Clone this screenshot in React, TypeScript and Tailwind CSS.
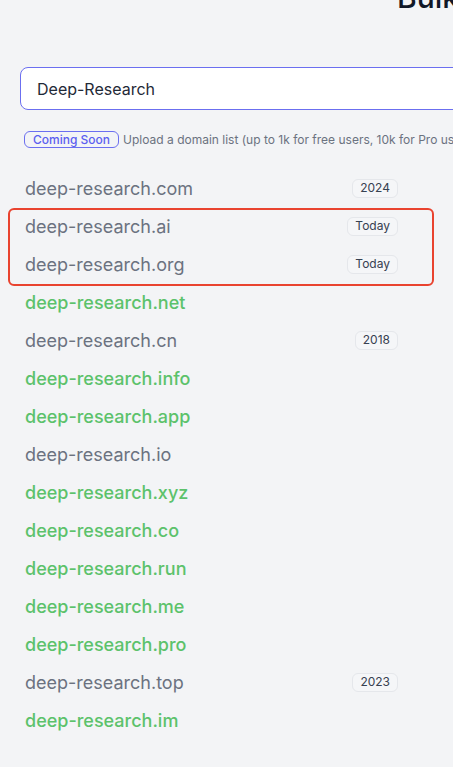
import React from 'react';

type Row = { name: string; year?: string };

const rows: Row[] = [
  { name: 'deep-research.com', year: '2024' },
  { name: 'deep-research.ai', year: 'Today' },
  { name: 'deep-research.org', year: 'Today' },
  { name: 'deep-research.net' },
  { name: 'deep-research.cn', year: '2018' },
  { name: 'deep-research.info' },
  { name: 'deep-research.app' },
  { name: 'deep-research.io', year: '' },
  { name: 'deep-research.xyz' },
  { name: 'deep-research.co' },
  { name: 'deep-research.run' },
  { name: 'deep-research.me' },
  { name: 'deep-research.pro' },
  { name: 'deep-research.top', year: '2023' },
  { name: 'deep-research.im' },
];

export default function App() {
  return (
    <div
      className="relative h-[767px] w-full overflow-hidden bg-[#f3f4f6]"
      style={{ fontFamily: 'Inter, "Noto Sans", sans-serif' }}
    >
      <h1 className="-mt-[21px] whitespace-nowrap pl-[397px] text-[30px] leading-[36px] font-medium text-[#111827]">
        Bulk Domain Search
      </h1>

      <div className="ml-[20px] mt-[52px] w-[520px]">
        <div className="flex h-[43px] items-center rounded-lg border border-[#6b6ff0] bg-white pl-4 text-base text-[#1f2937]">
          Deep-Research
        </div>

        <div className="mt-[21px] flex items-center gap-1 whitespace-nowrap pl-1 text-xs text-[#6b7280]">
          <span className="flex h-[17px] items-center rounded-md border border-[#6b6ff0] px-2 font-medium text-[#5b5ff0]">
            Coming Soon
          </span>
          <span>Upload a domain list (up to 1k for free users, 10k for Pro users)</span>
        </div>
      </div>

      <ul className="ml-[25px] mt-[21px] w-[373px]">
        {rows.map((row) => {
          const taken = row.year !== undefined;
          return (
            <li key={row.name} className="flex h-[38px] items-center justify-between">
              <span
                className={
                  taken
                    ? 'text-[18px] text-[#6b7280]'
                    : 'text-[18px] font-medium text-[#5cc26b]'
                }
              >
                {row.name}
              </span>
              {row.year ? (
                <span className="flex h-[19px] items-center rounded-md border border-[#e5e7eb] bg-[#f5f6f8] px-[7px] text-xs text-[#374151]">
                  {row.year}
                </span>
              ) : null}
            </li>
          );
        })}
      </ul>

      <div className="pointer-events-none absolute left-[8px] top-[208px] h-[78px] w-[426px] rounded-md border-2 border-[#e9432f]" />
    </div>
  );
}
